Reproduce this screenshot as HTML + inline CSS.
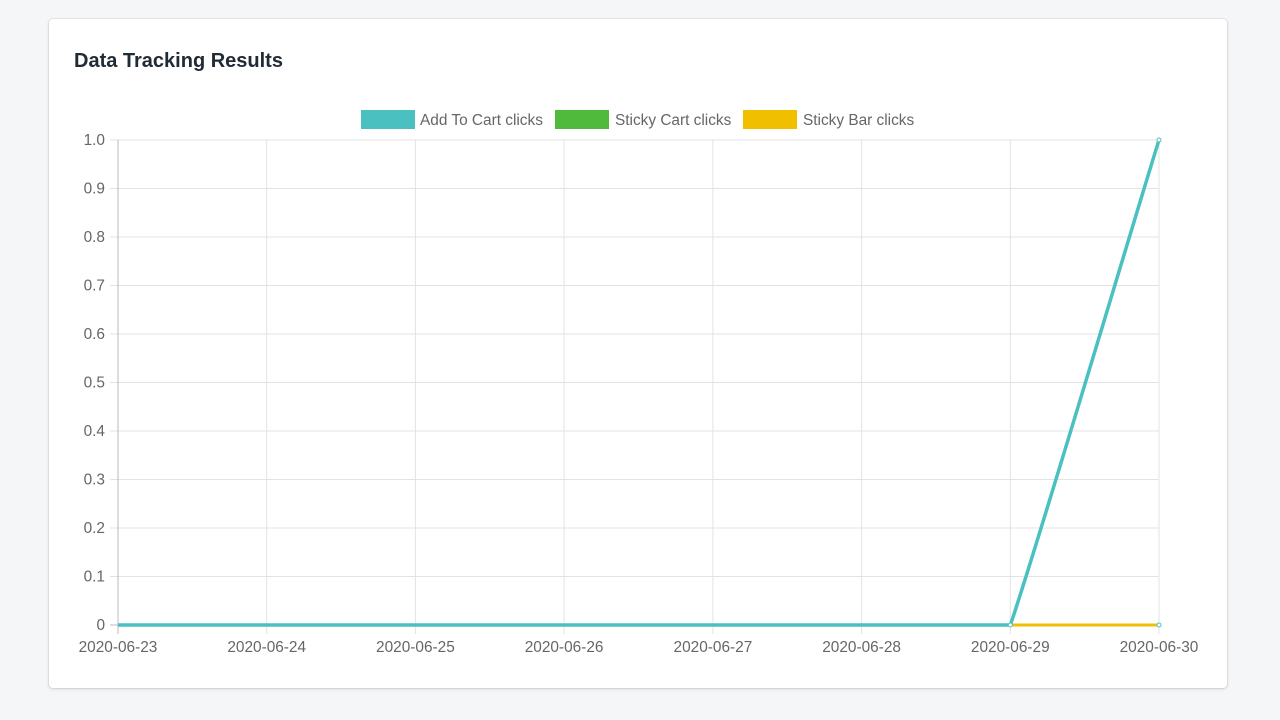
<!DOCTYPE html>
<html><head><meta charset="utf-8"><style>
body{margin:0;background:#f4f6f8;width:1280px;height:720px;overflow:hidden;font-family:"Liberation Sans",sans-serif}
.card{position:absolute;left:49px;top:19px;width:1178px;height:669px;background:#fff;border-radius:4px;box-shadow:0 0 0 1px rgba(63,63,68,.07),0 1px 3px rgba(63,63,68,.18)}
h2{position:absolute;left:25px;top:30px;margin:0;font-size:20px;font-weight:600;color:#212b36;line-height:24px}
svg{position:absolute;left:0;top:0}
</style></head><body>
<div class="card"><h2>Data Tracking Results</h2></div>
<svg width="1280" height="720" font-family="Liberation Sans, sans-serif" font-size="15.4" fill="#666">
<g stroke="#e3e3e3" stroke-width="1">
<line x1="110" y1="140" x2="1159" y2="140"/><line x1="110" y1="188.5" x2="1159" y2="188.5"/><line x1="110" y1="237" x2="1159" y2="237"/><line x1="110" y1="285.5" x2="1159" y2="285.5"/><line x1="110" y1="334" x2="1159" y2="334"/><line x1="110" y1="382.5" x2="1159" y2="382.5"/><line x1="110" y1="431" x2="1159" y2="431"/><line x1="110" y1="479.5" x2="1159" y2="479.5"/><line x1="110" y1="528" x2="1159" y2="528"/><line x1="110" y1="576.5" x2="1159" y2="576.5"/>
<line x1="266.7" y1="140" x2="266.7" y2="634"/><line x1="415.4" y1="140" x2="415.4" y2="634"/><line x1="564.1" y1="140" x2="564.1" y2="634"/><line x1="712.9" y1="140" x2="712.9" y2="634"/><line x1="861.6" y1="140" x2="861.6" y2="634"/><line x1="1010.3" y1="140" x2="1010.3" y2="634"/><line x1="1159" y1="140" x2="1159" y2="634"/>
</g>
<line x1="110" y1="625" x2="1159" y2="625" stroke="#bbb"/>
<line x1="118" y1="140" x2="118" y2="634" stroke="#bbb"/>
<g text-anchor="end">
<text x="105" y="145">1.0</text><text x="105" y="193.5">0.9</text><text x="105" y="242">0.8</text><text x="105" y="290.5">0.7</text><text x="105" y="339">0.6</text><text x="105" y="387.5">0.5</text><text x="105" y="436">0.4</text><text x="105" y="484.5">0.3</text><text x="105" y="533">0.2</text><text x="105" y="581.5">0.1</text><text x="105" y="630">0</text>
</g>
<g text-anchor="middle">
<text x="118" y="652">2020-06-23</text><text x="266.7" y="652">2020-06-24</text><text x="415.4" y="652">2020-06-25</text><text x="564.1" y="652">2020-06-26</text><text x="712.9" y="652">2020-06-27</text><text x="861.6" y="652">2020-06-28</text><text x="1010.3" y="652">2020-06-29</text><text x="1159" y="652">2020-06-30</text>
</g>
<rect x="361" y="110" width="54" height="19" fill="#4bc0c0"/><text x="420" y="125">Add To Cart clicks</text>
<rect x="555" y="110" width="54" height="19" fill="#4fba3c"/><text x="615" y="125">Sticky Cart clicks</text>
<rect x="743" y="110" width="54" height="19" fill="#f0c000"/><text x="803" y="125">Sticky Bar clicks</text>
<line x1="1010.3" y1="625" x2="1159" y2="625" stroke="#f0c000" stroke-width="3"/>
<path d="M118 625 L1010.3 625 C1030 570 1140 200 1159 140" fill="none" stroke="#4bc0c0" stroke-width="3.5"/>
<circle cx="1159" cy="625" r="2" fill="#fff" stroke="#4bc0c0"/>
<circle cx="1159" cy="140" r="2" fill="#fff" stroke="#4bc0c0"/>
<circle cx="1010.3" cy="625" r="2" fill="#fff" stroke="#4bc0c0"/>
</svg>
</body></html>
